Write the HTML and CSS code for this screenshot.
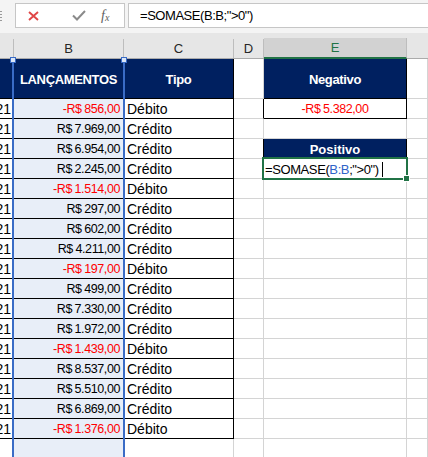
FILE: index.html
```html
<!DOCTYPE html>
<html lang="pt-BR">
<head>
<meta charset="utf-8">
<title>Planilha</title>
<link rel="stylesheet" href="styles.css">
</head>
<body>
<div class="fbar">
  <div class="grip"></div>
  <div class="tools">
    <svg class="ico-x" width="11" height="10" viewBox="0 0 11 10"><path d="M1 1L10 9M10 1L1 9" stroke="#e04646" stroke-width="1.9" fill="none"/></svg>
    <svg class="ico-ok" width="14" height="11" viewBox="0 0 14 11"><path d="M1 5.5L5 9.5L13 1" stroke="#8a8a8a" stroke-width="2" fill="none"/></svg>
    <span class="fx">f<span class="fxs">x</span></span>
  </div>
  <div class="finput">=SOMASE(B:B;"&gt;0")</div>
</div>

<div class="colhdr">
  <div class="ch"></div>
  <div class="ch">B</div>
  <div class="ch">C</div>
  <div class="ch">D</div>
  <div class="ch cur">E</div>
  <div class="ch last"></div>
</div>

<div class="sheet">
  <div class="grid">
    <div class="c h"></div><div class="c h">LANÇAMENTOS</div><div class="c h">Tipo</div><div class="c"></div><div class="c h">Negativo</div><div class="c"></div>

    <div class="c a">/2021</div><div class="c v neg">-R$ 856,00</div><div class="c t">Débito</div><div class="c bre"></div><div class="c box num neg">-R$ 5.382,00</div><div class="c"></div>
    <div class="c a">/2021</div><div class="c v">R$ 7.969,00</div><div class="c t">Crédito</div><div class="c"></div><div class="c"></div><div class="c"></div>
    <div class="c a">/2021</div><div class="c v">R$ 6.954,00</div><div class="c t">Crédito</div><div class="c bre"></div><div class="c h hs">Positivo</div><div class="c"></div>
    <div class="c a">/2021</div><div class="c v">R$ 2.245,00</div><div class="c t">Crédito</div><div class="c"></div><div class="c act">=SOMASE(<span class="ref">B:B</span>;"&gt;0")<span class="caret"></span></div><div class="c"></div>
    <div class="c a">/2021</div><div class="c v neg">-R$ 1.514,00</div><div class="c t">Débito</div><div class="c"></div><div class="c"></div><div class="c"></div>
    <div class="c a">/2021</div><div class="c v">R$ 297,00</div><div class="c t">Crédito</div><div class="c"></div><div class="c"></div><div class="c"></div>
    <div class="c a">/2021</div><div class="c v">R$ 602,00</div><div class="c t">Crédito</div><div class="c"></div><div class="c"></div><div class="c"></div>
    <div class="c a">/2021</div><div class="c v">R$ 4.211,00</div><div class="c t">Crédito</div><div class="c"></div><div class="c"></div><div class="c"></div>
    <div class="c a">/2021</div><div class="c v neg">-R$ 197,00</div><div class="c t">Débito</div><div class="c"></div><div class="c"></div><div class="c"></div>
    <div class="c a">/2021</div><div class="c v">R$ 499,00</div><div class="c t">Crédito</div><div class="c"></div><div class="c"></div><div class="c"></div>
    <div class="c a">/2021</div><div class="c v">R$ 7.330,00</div><div class="c t">Crédito</div><div class="c"></div><div class="c"></div><div class="c"></div>
    <div class="c a">/2021</div><div class="c v">R$ 1.972,00</div><div class="c t">Crédito</div><div class="c"></div><div class="c"></div><div class="c"></div>
    <div class="c a">/2021</div><div class="c v neg">-R$ 1.439,00</div><div class="c t">Débito</div><div class="c"></div><div class="c"></div><div class="c"></div>
    <div class="c a">/2021</div><div class="c v">R$ 8.537,00</div><div class="c t">Crédito</div><div class="c"></div><div class="c"></div><div class="c"></div>
    <div class="c a">/2021</div><div class="c v">R$ 5.510,00</div><div class="c t">Crédito</div><div class="c"></div><div class="c"></div><div class="c"></div>
    <div class="c a">/2021</div><div class="c v">R$ 6.869,00</div><div class="c t">Crédito</div><div class="c"></div><div class="c"></div><div class="c"></div>
    <div class="c a">/2021</div><div class="c v neg">-R$ 1.376,00</div><div class="c t">Débito</div><div class="c"></div><div class="c"></div><div class="c"></div>

    <div class="c"></div><div class="c fill"></div><div class="c"></div><div class="c"></div><div class="c"></div><div class="c"></div>
  </div>
  <div class="selb"><span class="hd hl"></span><span class="hd hr"></span></div>
</div>
</body>
</html>
```

FILE: styles.css
```css
html, body {
  margin: 0;
  padding: 0;
}
body {
  width: 428px;
  height: 457px;
  overflow: hidden;
  background: #ffffff;
  font-family: "Liberation Sans", Arial, sans-serif;
  color: #000;
}

/* formula bar */
.fbar {
  height: 33px;
  box-sizing: border-box;
  padding-top: 3px;
  display: flex;
  align-items: flex-start;
  background: #f4f4f4;
}
.grip {
  width: 2px;
  height: 12px;
  margin: 8px 13px 0 0;
  background: repeating-linear-gradient(#9a9a9a 0 1px, transparent 1px 3px);
}
.tools {
  width: 110px;
  height: 25px;
  box-sizing: border-box;
  border: 1px solid #c6c6c6;
  background: #fff;
  display: flex;
  align-items: center;
}
.ico-x {
  margin-left: 12px;
  margin-top: 1px;
}
.ico-ok {
  margin-left: 33px;
}
.fx {
  margin-left: 15px;
  font-family: "Liberation Serif", "Times New Roman", serif;
  font-style: italic;
  font-size: 14px;
  color: #606060;
  line-height: 1;
}
.fxs {
  font-size: 10px;
  position: relative;
  top: 1px;
}
.finput {
  flex: 1;
  margin-left: 3px;
  height: 25px;
  box-sizing: border-box;
  border: 1px solid #c6c6c6;
  border-right: none;
  background: #fff;
  padding-left: 11px;
  line-height: 23px;
  font-size: 13px;
  letter-spacing: -0.45px;
}

/* column headers */
.colhdr {
  height: 26px;
  box-sizing: border-box;
  padding-top: 5px;
  background: #e6e6e6;
  border-bottom: 1px solid #ababab;
  display: grid;
  grid-template-columns: 14px 110px 110px 30px 143px 1fr;
}
.ch {
  border-right: 1px solid #bdbdbd;
  margin-top: 1px;
  display: flex;
  align-items: center;
  justify-content: center;
  font-size: 13px;
  color: #262626;
}
.ch.last {
  border-right: none;
}
.ch.cur {
  background: #d2d2d2;
  color: #217346;
  margin-top: 0;
  margin-bottom: -1px;
  border-bottom: 2px solid #217346;
}

/* sheet */
.sheet {
  position: relative;
}
.grid {
  display: grid;
  grid-template-columns: 14px 110px 110px 30px 143px 1fr;
  grid-template-rows: 40px;
  grid-auto-rows: 20px;
}
.c {
  box-sizing: border-box;
  border-right: 1px solid #d4d4d4;
  border-bottom: 1px solid #d4d4d4;
  display: flex;
  align-items: center;
  white-space: nowrap;
  overflow: hidden;
  font-size: 14px;
  padding: 1px 2px 0;
}
.h {
  background: #002060;
  color: #fff;
  font-weight: bold;
  font-size: 13px;
  letter-spacing: -0.35px;
  justify-content: center;
  border-right-color: #000;
  border-bottom-color: #000;
}
.hs {
  letter-spacing: 0;
}
.a {
  justify-content: flex-end;
  border-bottom-color: #000;
  padding-right: 2px;
}
.v {
  background: #e8eef8;
  justify-content: flex-end;
  border-bottom-color: #000;
  padding-right: 3px;
  font-size: 12.5px;
  letter-spacing: -0.4px;
  word-spacing: -0.5px;
}
.num {
  font-size: 12.5px;
  letter-spacing: -0.4px;
  word-spacing: -0.5px;
}
.neg {
  color: #ff0000;
}
.t {
  border-right-color: #000;
  border-bottom-color: #000;
  padding-left: 3px;
}
.fill {
  background: #e8eef8;
}
.bre {
  border-right-color: #000;
}
.box {
  justify-content: center;
  border-right-color: #000;
  border-bottom-color: #000;
}
.act {
  position: relative;
  overflow: visible;
  padding-left: 1px;
  font-size: 13px;
  letter-spacing: -0.4px;
}
.act::after {
  content: "";
  position: absolute;
  top: -2px;
  left: -2px;
  right: -2px;
  bottom: -2px;
  border: 2px solid #217346;
}
.act::before {
  content: "";
  position: absolute;
  right: -4px;
  bottom: -4px;
  width: 5px;
  height: 5px;
  background: #217346;
  border: 1px solid #fff;
  z-index: 2;
}
.ref {
  color: #2f63c8;
}
.caret {
  display: inline-block;
  width: 1px;
  height: 15px;
  background: #000;
  margin-left: 3px;
}

/* range highlight of column B */
.selb {
  position: absolute;
  top: 0;
  bottom: 0;
  left: 12px;
  width: 113px;
  box-sizing: border-box;
  border-left: 2px solid #3a6cc6;
  border-right: 2px solid #3a6cc6;
}
.hd {
  position: absolute;
  top: -2px;
  width: 4px;
  height: 4px;
  background: #dce7f8;
  border: 1px solid #3a6cc6;
}
.hl {
  left: -4px;
}
.hr {
  right: -4px;
}
```
